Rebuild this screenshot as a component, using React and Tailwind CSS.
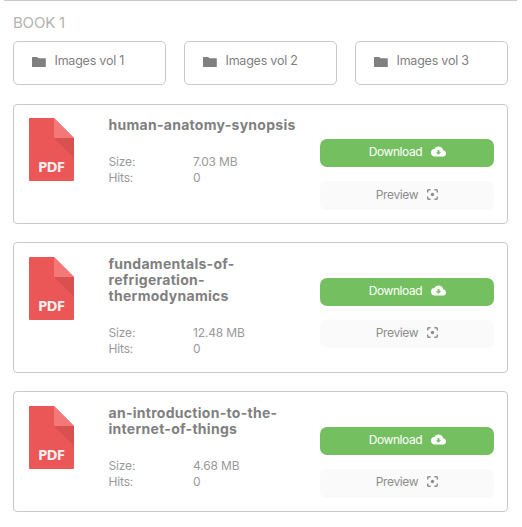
import clsx from "clsx";

const folders = ["Images vol 1", "Images vol 2", "Images vol 3"];

const files = [
  {
    name: "human-anatomy-synopsis",
    size: "7.03 MB",
    hits: 0,
    card: "h-[120px]",
    body: "pt-[13px]",
    actions: "pt-[34px]",
    preview: "h-[29px] pb-[2px]",
  },
  {
    name: "fundamentals-of-refrigeration-thermodynamics",
    size: "12.48 MB",
    hits: 0,
    card: "h-[131px]",
    body: "pt-[14px]",
    actions: "pt-[35px]",
    preview: "h-[28px] pb-[3px]",
  },
  {
    name: "an-introduction-to-the-internet-of-things",
    size: "4.68 MB",
    hits: 0,
    card: "h-[121px]",
    body: "pt-[14px]",
    actions: "pt-[35px]",
    preview: "h-[29px] pb-[3px]",
  },
];

function FolderIcon() {
  return (
    <svg viewBox="0 0 14 10" className="mt-1 h-2.5 w-3.5 flex-none" fill="#808080">
      <path d="M.4 0h4.8l1.2 1.2h6.8a.6.6 0 0 1 .6.6v7.6a.6.6 0 0 1-.6.6H.6a.6.6 0 0 1-.6-.6V.4A.4.4 0 0 1 .4 0z" />
    </svg>
  );
}

function CloudIcon() {
  return (
    <svg viewBox="0 0 24 24" className="ml-[9px] size-[15px] flex-none" fill="currentColor" fillRule="evenodd">
      <path d="M19.35 10.04A7.49 7.49 0 0 0 12 4C9.11 4 6.6 5.64 5.35 8.04A5.994 5.994 0 0 0 0 14c0 3.31 2.69 6 6 6h13c2.76 0 5-2.24 5-5 0-2.64-2.05-4.78-4.65-4.96zM16.2 13L12 17.2 7.8 13h2.7V9.5h3V13h2.7z" />
    </svg>
  );
}

function FocusIcon() {
  return (
    <svg viewBox="0 0 11 11" className="-mt-px ml-[9px] size-[11px] flex-none" fill="none" stroke="currentColor" strokeWidth="1.4">
      <path d="M.7 3.600V1.700a1 1 0 0 1 1-1h1.900M7.400.7h1.900a1 1 0 0 1 1 1v1.900M10.300 7.400v1.900a1 1 0 0 1-1 1H7.400M3.600 10.300H1.700a1 1 0 0 1-1-1V7.400" />
      <circle cx="5.5" cy="5.5" r="1.7" fill="currentColor" stroke="none" />
    </svg>
  );
}

function PdfIcon() {
  return (
    <svg viewBox="0 0 45 63" className="h-[63px] w-[45px] flex-none">
      <path d="M1 0h24l20 20v42a1 1 0 0 1-1 1H1a1 1 0 0 1-1-1V1a1 1 0 0 1 1-1z" fill="#eb5757" />
      <path d="M25 20h20v19.5z" fill="#d8504f" />
      <path d="M25 0l20 20H25z" fill="#f57878" />
      <text x="9" y="53.5" fontSize="15" fontWeight="700" fill="#f3f0f0" fontFamily="Open Sans, sans-serif" textLength="27">
        PDF
      </text>
    </svg>
  );
}

function FileCard({ file }) {
  return (
    <li className={clsx("flex rounded-[4px] border border-[#c9c9c9] pr-[13px] pl-[15px]", file.card)}>
      <div className={clsx("flex items-start", file.body)}>
        <PdfIcon />
        <div className="-mt-px ml-[34.5px] w-[195px] flex-none">
          <h3 className="text-[14px] leading-4 font-bold tracking-[0.28px] text-[#808080]">{file.name}</h3>
          <dl className="mt-[21px] grid grid-cols-[84.5px_1fr] text-[12px] leading-4 tracking-[-0.15px] text-[#999]">
            <dt>Size:</dt>
            <dd>{file.size}</dd>
            <dt>Hits:</dt>
            <dd>{file.hits}</dd>
          </dl>
        </div>
      </div>
      <div className={clsx("ml-auto w-[174px] flex-none", file.actions)}>
        <button className="flex h-7 w-full items-center justify-center rounded-[7px] bg-[#74bf60] pb-[3px] pl-px text-[12px] tracking-[-0.45px] text-white">
          Download
          <CloudIcon />
        </button>
        <button
          className={clsx(
            "mt-3.5 flex w-full items-center justify-center rounded-[7px] bg-[#fafafa] text-[12px] tracking-[-0.35px] text-[#8c8c8c]",
            file.preview
          )}
        >
          Preview
          <FocusIcon />
        </button>
      </div>
    </li>
  );
}

export default function App() {
  return (
    <main className="h-[527px] w-[522px] overflow-hidden bg-white font-['Inter',sans-serif]">
      <section className="mr-[5px] ml-1 border-t border-[#c9c9c9] px-[9px]">
        <h2 className="pt-3 text-[15px] leading-5 tracking-[-0.2px] text-[#b3b3b3]">BOOK 1</h2>
        <ul className="mt-2 grid grid-cols-3 gap-[18px]">
          {folders.map((name) => (
            <li
              key={name}
              className="flex h-11 items-start rounded-[5px] border border-[#c9c9c9] pt-[11px] pl-[18px] text-[12.5px] leading-4 tracking-[-0.22px] text-[#808080]"
            >
              <FolderIcon />
              <span className="ml-[8.5px]">{name}</span>
            </li>
          ))}
        </ul>
        <ul className="mt-[19px] flex flex-col gap-[18px]">
          {files.map((file) => (
            <FileCard key={file.name} file={file} />
          ))}
        </ul>
      </section>
    </main>
  );
}
